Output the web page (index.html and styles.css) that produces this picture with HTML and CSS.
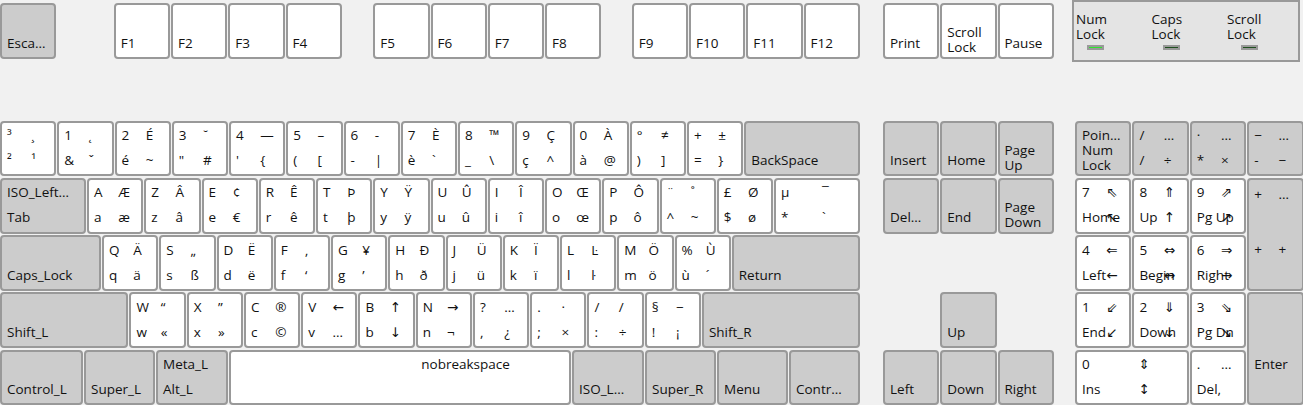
FILE: index.html
```html
<!DOCTYPE html>
<html lang="fr">
<head>
<meta charset="utf-8">
<title>Keyboard layout</title>
<link rel="stylesheet" href="styles.css">
</head>
<body>
<div class="board">
  <section class="main">
    <div class="frow">
      <div class="key fnk grey"><span class="bl">Esca…</span></div>
      <div class="fgroup g1">
        <div class="key fnk"><span class="bl">F1</span></div>
        <div class="key fnk"><span class="bl">F2</span></div>
        <div class="key fnk"><span class="bl">F3</span></div>
        <div class="key fnk"><span class="bl">F4</span></div>
      </div>
      <div class="fgroup g2">
        <div class="key fnk"><span class="bl">F5</span></div>
        <div class="key fnk"><span class="bl">F6</span></div>
        <div class="key fnk"><span class="bl">F7</span></div>
        <div class="key fnk"><span class="bl">F8</span></div>
      </div>
      <div class="fgroup g3">
        <div class="key fnk"><span class="bl">F9</span></div>
        <div class="key fnk"><span class="bl">F10</span></div>
        <div class="key fnk"><span class="bl">F11</span></div>
        <div class="key fnk"><span class="bl">F12</span></div>
      </div>
    </div>
    <div class="rows">
      <div class="row r-num">
        <div class="key"><span>³</span><span>¸</span><span>²</span><span>¹</span></div>
        <div class="key"><span>1</span><span>˛</span><span>&amp;</span><span>ˇ</span></div>
        <div class="key"><span>2</span><span>É</span><span>é</span><span>~</span></div>
        <div class="key"><span>3</span><span>˘</span><span>"</span><span>#</span></div>
        <div class="key"><span>4</span><span>—</span><span>'</span><span>{</span></div>
        <div class="key"><span>5</span><span>–</span><span>(</span><span>[</span></div>
        <div class="key"><span>6</span><span>-</span><span>-</span><span>|</span></div>
        <div class="key"><span>7</span><span>È</span><span>è</span><span>`</span></div>
        <div class="key"><span>8</span><span>™</span><span>_</span><span>\</span></div>
        <div class="key"><span>9</span><span>Ç</span><span>ç</span><span>^</span></div>
        <div class="key"><span>0</span><span>À</span><span>à</span><span>@</span></div>
        <div class="key"><span>°</span><span>≠</span><span>)</span><span>]</span></div>
        <div class="key"><span>+</span><span>±</span><span>=</span><span>}</span></div>
        <div class="key grey"><span class="bl">BackSpace</span></div>
      </div>
      <div class="row r-tab">
        <div class="key grey"><span>ISO_Left…</span><span class="bl">Tab</span></div>
        <div class="key"><span>A</span><span>Æ</span><span>a</span><span>æ</span></div>
        <div class="key"><span>Z</span><span>Â</span><span>z</span><span>â</span></div>
        <div class="key"><span>E</span><span>¢</span><span>e</span><span>€</span></div>
        <div class="key"><span>R</span><span>Ê</span><span>r</span><span>ê</span></div>
        <div class="key"><span>T</span><span>Þ</span><span>t</span><span>þ</span></div>
        <div class="key"><span>Y</span><span>Ÿ</span><span>y</span><span>ÿ</span></div>
        <div class="key"><span>U</span><span>Û</span><span>u</span><span>û</span></div>
        <div class="key"><span>I</span><span>Î</span><span>i</span><span>î</span></div>
        <div class="key"><span>O</span><span>Œ</span><span>o</span><span>œ</span></div>
        <div class="key"><span>P</span><span>Ô</span><span>p</span><span>ô</span></div>
        <div class="key"><span>¨</span><span>˚</span><span>^</span><span>~</span></div>
        <div class="key"><span>£</span><span>Ø</span><span>$</span><span>ø</span></div>
        <div class="key"><span>µ</span><span>¯</span><span>*</span><span>`</span></div>
      </div>
      <div class="row r-caps">
        <div class="key grey"><span class="bl">Caps_Lock</span></div>
        <div class="key"><span>Q</span><span>Ä</span><span>q</span><span>ä</span></div>
        <div class="key"><span>S</span><span>„</span><span>s</span><span>ß</span></div>
        <div class="key"><span>D</span><span>Ë</span><span>d</span><span>ë</span></div>
        <div class="key"><span>F</span><span>‚</span><span>f</span><span>‘</span></div>
        <div class="key"><span>G</span><span>¥</span><span>g</span><span>’</span></div>
        <div class="key"><span>H</span><span>Ð</span><span>h</span><span>ð</span></div>
        <div class="key"><span>J</span><span>Ü</span><span>j</span><span>ü</span></div>
        <div class="key"><span>K</span><span>Ï</span><span>k</span><span>ï</span></div>
        <div class="key"><span>L</span><span>Ŀ</span><span>l</span><span>ŀ</span></div>
        <div class="key"><span>M</span><span>Ö</span><span>m</span><span>ö</span></div>
        <div class="key"><span>%</span><span>Ù</span><span>ù</span><span>´</span></div>
        <div class="key grey"><span class="bl">Return</span></div>
      </div>
      <div class="row r-shift">
        <div class="key grey"><span class="bl">Shift_L</span></div>
        <div class="key"><span>W</span><span>“</span><span>w</span><span>«</span></div>
        <div class="key"><span>X</span><span>”</span><span>x</span><span>»</span></div>
        <div class="key"><span>C</span><span>®</span><span>c</span><span>©</span></div>
        <div class="key"><span>V</span><span>←</span><span>v</span><span>…</span></div>
        <div class="key"><span>B</span><span>↑</span><span>b</span><span>↓</span></div>
        <div class="key"><span>N</span><span>→</span><span>n</span><span>¬</span></div>
        <div class="key"><span>?</span><span>…</span><span>,</span><span>¿</span></div>
        <div class="key"><span>.</span><span>·</span><span>;</span><span>×</span></div>
        <div class="key"><span>/</span><span>/</span><span>:</span><span>÷</span></div>
        <div class="key"><span>§</span><span>−</span><span>!</span><span>¡</span></div>
        <div class="key grey"><span class="bl">Shift_R</span></div>
      </div>
      <div class="row r-bottom">
        <div class="key grey"><span class="bl">Control_L</span></div>
        <div class="key grey"><span class="bl">Super_L</span></div>
        <div class="key grey"><span>Meta_L</span><span class="bl">Alt_L</span></div>
        <div class="key"><span class="tr">nobreakspace</span></div>
        <div class="key grey"><span class="bl">ISO_L…</span></div>
        <div class="key grey"><span class="bl">Super_R</span></div>
        <div class="key grey"><span class="bl">Menu</span></div>
        <div class="key grey"><span class="bl">Contr…</span></div>
      </div>
    </div>
  </section>

  <section class="nav">
    <div class="nav-top">
      <div class="key"><span class="bl">Print</span></div>
      <div class="key"><span class="bl two">Scroll<br>Lock</span></div>
      <div class="key"><span class="bl">Pause</span></div>
    </div>
    <div class="nav-grid">
      <div class="key grey"><span class="bl">Insert</span></div>
      <div class="key grey"><span class="bl">Home</span></div>
      <div class="key grey"><span class="bl two">Page<br>Up</span></div>
      <div class="key grey"><span class="bl">Del…</span></div>
      <div class="key grey"><span class="bl">End</span></div>
      <div class="key grey"><span class="bl two">Page<br>Down</span></div>
      <div class="key grey arrow-up"><span class="bl">Up</span></div>
      <div class="key grey arrow-row"><span class="bl">Left</span></div>
      <div class="key grey arrow-row"><span class="bl">Down</span></div>
      <div class="key grey arrow-row"><span class="bl">Right</span></div>
    </div>
  </section>

  <section class="side">
    <div class="locks">
      <div class="lock">Num<br>Lock<i class="led on"></i></div>
      <div class="lock">Caps<br>Lock<i class="led"></i></div>
      <div class="lock lock-scroll">Scroll<br>Lock<i class="led"></i></div>
    </div>
    <div class="numpad">
      <div class="key grey"><span>Poin…</span><span class="bl two">Num<br>Lock</span></div>
      <div class="key grey"><span>/</span><span>…</span><span>/</span><span>÷</span></div>
      <div class="key grey"><span>·</span><span>…</span><span>*</span><span>×</span></div>
      <div class="key grey"><span>−</span><span>…</span><span>-</span><span>−</span></div>
      <div class="key"><span>7</span><span>⇖</span><span>Home</span><span>↖</span></div>
      <div class="key"><span>8</span><span>⇑</span><span>Up</span><span>↑</span></div>
      <div class="key"><span>9</span><span>⇗</span><span>Pg Up</span><span>↗</span></div>
      <div class="key grey tall"><span>+</span><span>…</span><span>+</span><span>+</span></div>
      <div class="key"><span>4</span><span>⇐</span><span>Left</span><span>←</span></div>
      <div class="key"><span>5</span><span>⇔</span><span>Begin</span><span>↔</span></div>
      <div class="key"><span>6</span><span>⇒</span><span>Right</span><span>→</span></div>
      <div class="key"><span>1</span><span>⇙</span><span>End</span><span>↙</span></div>
      <div class="key"><span>2</span><span>⇓</span><span>Down</span><span>↓</span></div>
      <div class="key"><span>3</span><span>⇘</span><span>Pg Dn</span><span>↘</span></div>
      <div class="key grey tall"><span class="bl">Enter</span></div>
      <div class="key wide"><span>0</span><span>⇕</span><span>Ins</span><span>↕</span></div>
      <div class="key"><span>.</span><span>…</span><span>Del,</span></div>
    </div>
  </section>
</div>
</body>
</html>
```
FILE: styles.css
```css
html, body {
  margin: 0;
  height: 405px;
  overflow: hidden;
  background: #f1f1f1;
}

body {
  font-family: "Open Sans", "DejaVu Sans", sans-serif;
  font-size: 13.5px;
  line-height: 15px;
  color: #111;
}

.board {
  display: grid;
  grid-template-columns: 860px 170px 231px;
  column-gap: 23px;
  width: 1303px;
}

.board > .side { margin-left: -4px; }

/* keys */
.key {
  box-sizing: border-box;
  display: grid;
  grid-template-columns: 56% 1fr;
  grid-template-rows: 26px 24px;
  align-items: center;
  height: 55.8px;
  background: #fff;
  border: 2px solid #999;
  border-radius: 4px;
  white-space: nowrap;
  min-width: 0;
}

.key.grey { background: #ccc; }

.key > span:nth-child(odd) { padding-left: 5px; }
.key > span.tr { grid-column: 2; grid-row: 1; padding-left: 1px; }
.key > span.bl { grid-column: 1; grid-row: 2; padding-left: 5px; }
.key > span.two { align-self: start; margin-top: -6px; }

.key.tall {
  height: 113.1px;
  grid-row: span 2;
  grid-template-rows: 30px 80px;
}

.key.wide { grid-column: span 2; }

/* function row */
.frow {
  display: flex;
  height: 120.5px;
  box-sizing: border-box;
  padding-top: 3px;
  align-items: flex-start;
}

.frow > .key { width: 56.25px; }

.fgroup {
  display: grid;
  grid-template-columns: repeat(4, 56.25px);
  column-gap: 1px;
}

.g1 { margin-left: 57.5px; }
.g2 { margin-left: 31.5px; }
.g3 { margin-left: 30.5px; }

/* main rows */
.rows {
  display: flex;
  flex-direction: column;
  row-gap: 1.5px;
}

.row {
  display: grid;
  column-gap: 1px;
}

.r-num { grid-template-columns: repeat(13, 56.25px) 1fr; }
.r-tab { grid-template-columns: 86px repeat(12, 56.25px) 1fr; }
.r-caps { grid-template-columns: 101px repeat(11, 56.25px) 1fr; }
.r-shift { grid-template-columns: 128.4px repeat(10, 56.25px) 1fr; }
.r-bottom { grid-template-columns: 83px 71px 72px 342px 72px 71px 71px 71px; }

/* navigation cluster */
.nav-top {
  display: grid;
  grid-template-columns: repeat(3, 56.25px);
  column-gap: 1px;
  height: 120.5px;
  box-sizing: border-box;
  padding-top: 3px;
  align-items: start;
}

.nav-grid {
  display: grid;
  grid-template-columns: repeat(3, 56.25px);
  grid-template-rows: repeat(5, 55.8px);
  gap: 1.5px 1px;
}

.arrow-up { grid-column: 2; grid-row: 4; }
.arrow-row { grid-row: 5; }

/* lock indicators */
.locks {
  box-sizing: border-box;
  display: flex;
  width: 228px;
  height: 62px;
  padding: 10px 0 0 2px;
  background: #e4e4e4;
  border: 2px solid #999;
}

.lock { flex: none; width: 75.5px; }

.led {
  display: block;
  width: 17px;
  height: 5px;
  margin: 3px 0 0 11px;
  background: linear-gradient(#1f4f1f, #1f4f1f) center / 13px 1px no-repeat #999;
}

.led.on { background: linear-gradient(#2ee62e, #2ee62e) center / 13px 1px no-repeat #999; }
.lock-scroll .led { margin-left: 14px; }

/* number pad */
.numpad {
  display: grid;
  grid-template-columns: repeat(4, 56.4px);
  grid-template-rows: repeat(5, 55.8px);
  gap: 1.5px 1px;
  margin: 58.5px 0 0 3px;
}
```
